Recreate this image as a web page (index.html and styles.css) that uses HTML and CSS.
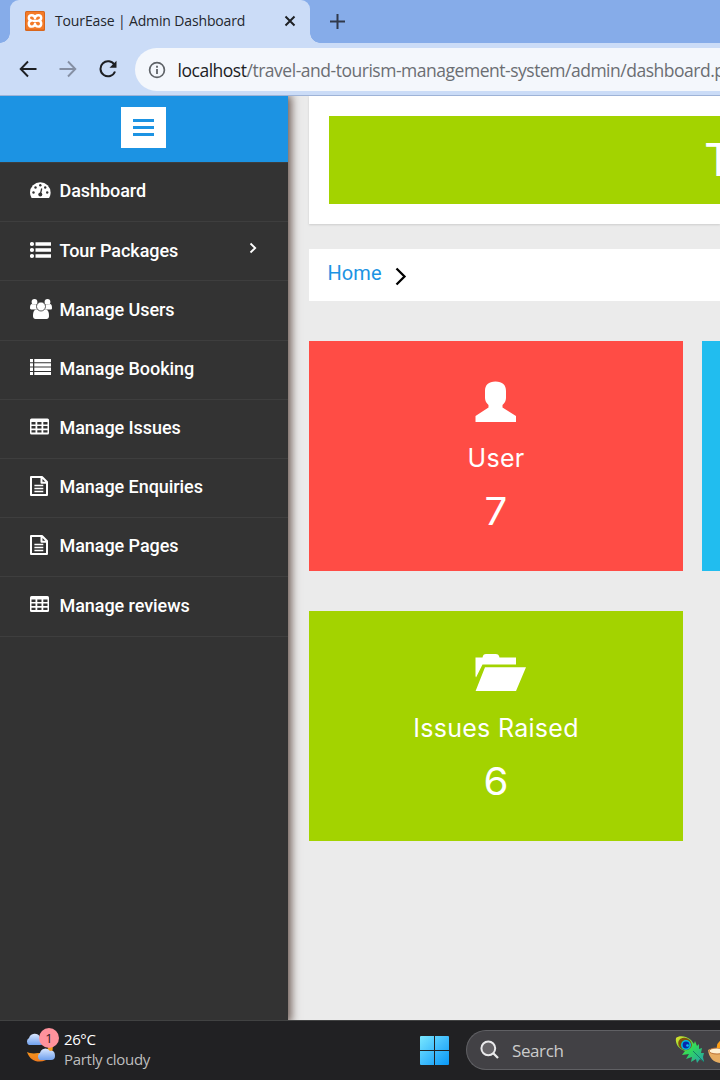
FILE: index.html
```html
<!DOCTYPE html>
<html lang="en">
<head>
<meta charset="utf-8">
<title>TourEase | Admin Dashboard</title>
<link rel="stylesheet" href="styles.css">
</head>
<body>
<header class="browser">
  <div class="tabstrip">
    <div class="tab">
      <svg class="favicon" width="20" height="20" viewBox="0 0 20 20"><rect width="20" height="20" rx="1.500" fill="#d8661c"/><rect x="1" y="1" width="18" height="17.500" rx="1" fill="#f47b29"/><path d="M10 7.200C9.500 3.500 4 3.300 3.800 6.800C3.700 8.600 5 9.300 6.500 9.600C4.600 10 3.600 11.200 3.800 13C4.200 16.600 9.500 16.400 10 12.800C10.500 16.400 15.800 16.600 16.200 13C16.400 11.200 15.400 10 13.500 9.600C15 9.300 16.300 8.600 16.200 6.800C16 3.300 10.500 3.500 10 7.200ZM7.500 9.900H12.500" fill="none" stroke="#fff" stroke-width="2.400" stroke-linejoin="round"/></svg>
      <span class="tab-title">TourEase | Admin Dashboard</span>
      <svg class="tab-close" width="12" height="12" viewBox="0 0 12 12"><path d="M1.500 1.500l9 9M10.500 1.500l-9 9" stroke="#1f2125" stroke-width="2"/></svg>
    </div>
    <svg class="new-tab" width="15" height="15" viewBox="0 0 15 15"><path d="M7.500 0v15M0 7.500h15" stroke="#30394b" stroke-width="2"/></svg>
  </div>
  <div class="toolbar">
    <svg width="18" height="18" viewBox="0 0 18 18" class="back"><path d="M17.500 9H2M9 1.500L1.700 9L9 16.500" fill="none" stroke="#1d1f23" stroke-width="1.900"/></svg>
    <svg width="18" height="18" viewBox="0 0 18 18" class="forward"><path d="M.5 9H16M9 1.500L16.300 9L9 16.500" fill="none" stroke="#858fa3" stroke-width="1.900"/></svg>
    <svg width="18" height="18" viewBox="0 0 18 18" class="reload"><path d="M15.500 5A7.500 7.500 0 1 0 16 11.500" fill="none" stroke="#1d1f23" stroke-width="2"/><path d="M17.500 .8V7.800H10.500Z" fill="#1d1f23"/></svg>
    <div class="address">
      <svg width="18" height="18" viewBox="0 0 18 18"><circle cx="9" cy="9" r="7.400" fill="none" stroke="#5f6368" stroke-width="1.700"/><path d="M9 8v5M9 4.800v1.900" stroke="#5f6368" stroke-width="1.800"/></svg>
      <span class="url"><b>localhost</b>/travel-and-tourism-management-system/admin/dashboard.p</span>
    </div>
  </div>
</header>
<div class="page">
  <nav class="sidebar">
    <div class="brand"><button class="menu-toggle"><svg width="21" height="17" viewBox="0 0 21 17"><path d="M0 1.500h21M0 8.500h21M0 15.500h21" stroke="#1c93e3" stroke-width="3"/></svg></button></div>
    <a class="item"><svg class="icon" viewBox="0 0 22 20"><path fill="#fff" fill-rule="evenodd" d="M0 12.500a10.300 10.300 0 0 1 20.600 0c0 2-.6 3.900-1.600 5.500H1.600A10.300 10.300 0 0 1 0 12.500Z"/><g fill="#333"><circle cx="3.500" cy="12.500" r="1.200"/><circle cx="5.500" cy="7.500" r="1.200"/><circle cx="10.300" cy="5.200" r="1.200"/><circle cx="15.200" cy="7.500" r="1.200"/><circle cx="17.200" cy="12.500" r="1.200"/><circle cx="10.300" cy="14.500" r="2"/></g><path d="M10.300 14.500L11.700 8.500" stroke="#333" stroke-width="1.300"/></svg><span>Dashboard</span></a>
    <a class="item"><svg class="icon" viewBox="0 0 22 20"><g fill="#fff"><circle cx="2" cy="4" r="2.100"/><circle cx="2" cy="10" r="2.100"/><circle cx="2" cy="16" r="2.100"/><path d="M5.500 2.200H21v3.600H5.500zM5.500 8.200H21v3.600H5.500zM5.500 14.200H21v3.600H5.500z"/></g></svg><span>Tour Packages</span><svg class="chevron" width="8" height="12" viewBox="0 0 8 12"><path d="M1.500 1.500L6.200 6L1.500 10.500" fill="none" stroke="#fff" stroke-width="1.800"/></svg></a>
    <a class="item"><svg class="icon" viewBox="0 0 22 20"><g fill="#fff"><circle cx="4.500" cy="2.900" r="2.900"/><circle cx="17.500" cy="2.900" r="2.900"/><path d="M0 9c0-2.400.7-4 2-4c2 1.200 3.600 1 5 .4c-.5 2 0 3.800 1 5H1.500C.5 10.500 0 10 0 9ZM22 9c0-2.400-.7-4-2-4c-2 1.200-3.600 1-5 .4c.5 2 0 3.800-1 5h6.500c1 0 1.500-.5 1.500-1.500Z"/><path d="M3 17c0-4 1-6.500 3.700-6.500h8.600c2.700 0 3.700 2.500 3.700 6.500c0 2-1 3-2.500 3h-11C4 20 3 19 3 17Z"/></g><circle cx="11" cy="7.500" r="4.500" fill="#fff" stroke="#333" stroke-width=".8"/></svg><span>Manage Users</span></a>
    <a class="item"><svg class="icon" viewBox="0 0 22 20"><path fill="#fff" d="M0 1h3v3.300H0zM4.300 1H21v3.300H4.300zM0 5.300h3v3.300H0zM4.300 5.300H21v3.300H4.300zM0 9.600h3v3.300H0zM4.300 9.600H21v3.300H4.300zM0 14h3v3H0zM4.300 14H21v3H4.300z"/></svg><span>Manage Booking</span></a>
    <a class="item"><svg class="icon" viewBox="0 0 22 20"><rect y="1.500" width="19" height="16" rx="1.500" fill="#fff"/><path fill="#333" d="M1.500 5h4v2.400h-4zM7.300 5h4.200v2.400H7.300zM13.300 5h4.200v2.400h-4.200zM1.500 9.100h4v2.400h-4zM7.300 9.100h4.200v2.400H7.300zM13.300 9.100h4.200v2.400h-4.200zM1.500 13.200h4v2.400h-4zM7.300 13.200h4.200v2.400H7.300zM13.300 13.200h4.200v2.400h-4.200z"/></svg><span>Manage Issues</span></a>
    <a class="item"><svg class="icon" viewBox="0 0 22 20"><path d="M1 1H12L17 6V19H1ZM11.500 1v5.700H17" fill="none" stroke="#fff" stroke-width="2" stroke-linejoin="round"/><path d="M4.400 9.500h8.900M4.400 12.500h8.900M4.400 15.500h8.900" stroke="#fff" stroke-width="1.700"/></svg><span>Manage Enquiries</span></a>
    <a class="item"><svg class="icon" viewBox="0 0 22 20"><path d="M1 1H12L17 6V19H1ZM11.500 1v5.700H17" fill="none" stroke="#fff" stroke-width="2" stroke-linejoin="round"/><path d="M4.400 9.500h8.900M4.400 12.500h8.900M4.400 15.500h8.900" stroke="#fff" stroke-width="1.700"/></svg><span>Manage Pages</span></a>
    <a class="item"><svg class="icon" viewBox="0 0 22 20"><rect y="1" width="19" height="16" rx="1.500" fill="#fff"/><path fill="#333" d="M1.500 4.500h4v2.400h-4zM7.300 4.500h4.200v2.400H7.300zM13.300 4.500h4.200v2.400h-4.200zM1.500 8.600h4V11h-4zM7.300 8.600h4.200V11H7.300zM13.300 8.600h4.200V11h-4.200zM1.500 12.700h4v2.400h-4zM7.300 12.700h4.200v2.400H7.300zM13.300 12.700h4.200v2.400h-4.200z"/></svg><span>Manage reviews</span></a>
  </nav>
  <main class="content">
    <section class="banner"><div class="banner-fill">T</div></section>
    <div class="crumbs"><a>Home</a><svg width="12" height="19" viewBox="0 0 12 19"><path d="M1.500 1.500L9.500 9.500L1.500 17.500" fill="none" stroke="#000" stroke-width="2.300"/></svg></div>
    <div class="cards">
      <article class="card red">
        <svg width="52" height="42" viewBox="0 0 52 42"><path fill="#fff" d="M20.500 1.500C13.500 1.500 10 5 10 11v7c0 3 1.500 5 3.500 7v2.500L.5 36v6H41v-6L27.500 27.500V25c2-2 3.500-4 3.500-7v-7C31 5 27.500 1.500 20.500 1.500Z"/></svg>
        <h3>User</h3><p>7</p>
      </article>
      <article class="card blue"></article>
      <article class="card green">
        <svg width="52" height="42" viewBox="0 0 52 42"><path fill="#fff" d="M.5 26V7.500H7.500C8 5 9 4 11 4H20.500C23 4 24 5 24.500 7.500H41V14.500H7.500L1 27.500ZM10 17.300H51L41 41H.6Z"/></svg>
        <h3>Issues Raised</h3><p>6</p>
      </article>
    </div>
  </main>
</div>
<footer class="taskbar">
  <div class="weather">
    <svg width="36" height="40" viewBox="0 0 36 40"><defs><linearGradient id="cloud" x2="0" y2="1"><stop stop-color="#dae8ff"/><stop offset="1" stop-color="#6fa0ed"/></linearGradient><linearGradient id="moon" x2="0" y2="1"><stop stop-color="#ffbb17"/><stop offset="1" stop-color="#ee7b1f"/></linearGradient></defs><path d="M26 7C29 15 23 24 14 24C9 25 5 24 3 23C7 35 20 35 27 27C30 20 29 12 26 7Z" fill="url(#moon)"/><path d="M5 16a4 4 0 0 1 0-7a6 6 0 0 1 11-1q4 0 4 5q0 3-4 3Z" fill="url(#cloud)"/><path d="M16 31a4 4 0 0 1 0-7a5.500 5.500 0 0 1 10-2q5-1 5 5q0 4-4 4Z" fill="url(#cloud)"/></svg>
    <span class="badge">1</span>
    <div class="weather-text"><span class="temp">26°C</span><span class="sky">Partly cloudy</span></div>
  </div>
  <svg class="start" width="29" height="29" viewBox="0 0 29 29"><defs><linearGradient id="win" x2="1" y2="1"><stop stop-color="#79e8ff"/><stop offset=".5" stop-color="#41bdfc"/><stop offset="1" stop-color="#0898f7"/></linearGradient></defs><path fill="url(#win)" d="M1 0h13v14H0V1a1 1 0 0 1 1-1ZM15 0h13a1 1 0 0 1 1 1v13H15ZM0 15h14v14H1a1 1 0 0 1-1-1ZM15 15h14v13a1 1 0 0 1-1 1H15Z"/></svg>
  <div class="search">
    <svg width="20" height="20" viewBox="0 0 20 20"><circle cx="8.300" cy="8.300" r="6.900" fill="#656367" stroke="#e9e9eb" stroke-width="2"/><path d="M13 13l5 5" stroke="#e9e9eb" stroke-width="2.300"/></svg>
    <span>Search</span>
    <svg class="feather" width="46" height="30" viewBox="0 0 46 30"><defs><linearGradient id="plume" x2="1" y2="1"><stop stop-color="#e7df24"/><stop offset=".5" stop-color="#31dc59"/><stop offset="1" stop-color="#259ead"/></linearGradient></defs><path fill="url(#plume)" d="M1 3C4 0 12 1 16 5L19 9L20 6L22 11L24 9V14L27 13L26 18L29 18L28 22L29 27L25 24L22 28L21 24L16 27L17 22L11 24L14 19L7 20L10 16C3 14 0 8 1 3Z"/><path d="M18 16L29 27" stroke="#147d65"/><ellipse cx="10" cy="9" rx="7" ry="6" transform="rotate(25 10 9)" fill="#80500d"/><circle cx="11" cy="10" r="5" fill="#00bdd9"/><circle cx="11" cy="10" r="3.400" fill="#0827ac"/><circle cx="12.500" cy="10.500" r="1.300" fill="#00c9e9"/><path d="M33 15q4-3 13 0v13C39 28 34 23 33 15Z" fill="#e7ad62"/><ellipse cx="42" cy="16" rx="8" ry="3" fill="#fff1d3" stroke="#ba7236"/><path d="M42 13q-1-4 4-8v8Z" fill="#ff9f16"/></svg>
  </div>
</footer>
</body>
</html>
```

FILE: styles.css
```css
* { box-sizing: border-box; }
body { margin: 0; width: 720px; height: 1080px; overflow: hidden; display: flex; flex-direction: column; font-family: Roboto, sans-serif; }
svg { display: block; flex: none; }
.browser { height: 96px; flex: none; background: #cbdcf7; border-bottom: 1px solid #9eb3d7; font-family: "Open Sans", sans-serif; }
.tabstrip { height: 43px; background: #86ace9; display: flex; align-items: center; padding-left: 10px; }
.tab { position: relative; width: 300px; height: 43px; background: #cbdcf7; border-radius: 9px 9px 0 0; display: flex; align-items: center; padding: 0 14px 1px 15px; }
.tab::before, .tab::after { content: ""; position: absolute; bottom: 0; width: 10px; height: 10px; }
.tab::before { left: -10px; background: radial-gradient(circle at 0 0, #86ace9 9.500px, #cbdcf7 10px); }
.tab::after { right: -10px; background: radial-gradient(circle at 100% 0, #86ace9 9.500px, #cbdcf7 10px); }
.tab-title { margin-left: 10px; padding-bottom: 1px; font-size: 14px; color: #24272d; white-space: nowrap; letter-spacing: -.14px; }
.tab-close { margin-left: auto; }
.new-tab { margin-left: 20px; }
.toolbar { height: 52px; display: flex; align-items: center; padding-left: 18.500px; }
.forward, .reload { margin-left: 22px; }
.address { align-self: flex-start; margin: 5px 0 0 18.500px; flex: 1; min-width: 0; height: 43px; border-radius: 22px 0 0 22px; background: #f4f7fc; display: flex; align-items: center; padding-left: 13px; overflow: hidden; }
.url { margin-left: 11.500px; white-space: nowrap; font-size: 17.500px; color: #6b6e73; letter-spacing: -.48px; }
.url b { font-weight: 400; color: #202124; }
.page { height: 924px; flex: none; display: flex; background: #ebebeb; overflow: hidden; }
.sidebar { width: 288px; flex: none; background: #333; box-shadow: 1px 1px 9px 2px #66534c; z-index: 1; }
.brand { height: 66px; background: #1c93e3; display: flex; justify-content: center; padding: 11px 1px 0 0; }
.menu-toggle { width: 45px; height: 41px; border: 0; background: #fff; padding: 0; display: flex; align-items: center; justify-content: center; }
.item { height: 59.200px; border-top: 1px solid #3e3e3e; display: flex; align-items: center; padding: 0 31px 2.500px 29.500px; color: #fff; font-size: 18px; font-weight: 500; white-space: nowrap; letter-spacing: -.06px; }
.item:nth-of-type(1) { padding-bottom: 4px; }
.item:nth-of-type(1) .icon { margin-top: 1px; }
.item:last-child { height: 60.500px; border-bottom: 1px solid #3e3e3e; }
.icon { width: 22px; height: 20px; margin: 0 8px 1px 0; }
.chevron { margin-left: auto; margin-bottom: 4px; }
.content { margin-left: 21px; flex: 1; min-width: 0; }
.banner { height: 128px; background: #fff; padding: 20px 0 20px 20px; box-shadow: 0 1px 2px #ccc; }
.banner-fill { height: 88px; background: #a3d300; color: #fff; font: 400 45px/88px Inter, sans-serif; padding-left: 375px; overflow: hidden; }
.crumbs { margin-top: 25px; height: 52px; background: #fff; display: flex; align-items: center; padding-left: 18.500px; font-size: 20px; color: #1c93e3; }
.crumbs a { padding-bottom: 4px; letter-spacing: .1px; }
.crumbs svg { margin: 2px 0 0 13.500px; }
.cards { margin-top: 40px; display: grid; grid-template-columns: 374px 1fr; gap: 40px 19px; }
.card { height: 230px; padding-top: 39px; color: #fff; font-family: Inter, sans-serif; }
.card svg { margin-left: 166px; }
.card h3 { margin: 16px 0 0; font-size: 25px; line-height: 40px; font-weight: 400; text-align: center; letter-spacing: .3px; }
.card p { margin: 8px 0 0; font-size: 38px; line-height: 50px; font-weight: 400; text-align: center; transform: scaleX(1.06); }
.red { background: #ff4c45; }
.blue { background: #21bdef; }
.green { background: #a3d300; }
.taskbar { height: 60px; flex: none; background: #212123; border-top: 1px solid #414242; display: flex; font-family: "Open Sans", sans-serif; color: #fff; }
.weather { position: relative; width: 420px; flex: none; padding: 8px 0 0 24px; display: flex; }
.weather-text { display: flex; flex-direction: column; margin-left: 4px; font-size: 15px; line-height: 20px; }
.temp { letter-spacing: -.4px; }
.sky { color: #bebebe; letter-spacing: -.3px; }
.badge { position: absolute; left: 39px; top: 7px; width: 20px; height: 20px; border-radius: 50%; background: #ff929c; color: #34181b; font-size: 13px; line-height: 20px; text-align: center; }
.start { margin-top: 15px; }
.search { margin: 9px 0 0 17px; flex: 1; min-width: 0; height: 40px; border: 1px solid #606064; border-right: 0; border-radius: 20px 0 0 20px; background: #424145; display: flex; align-items: center; padding-left: 13px; font-size: 17px; color: #ccc; overflow: hidden; }
.search span { margin-left: 12px; letter-spacing: -.4px; }
.feather { margin-left: 112px; }
```
